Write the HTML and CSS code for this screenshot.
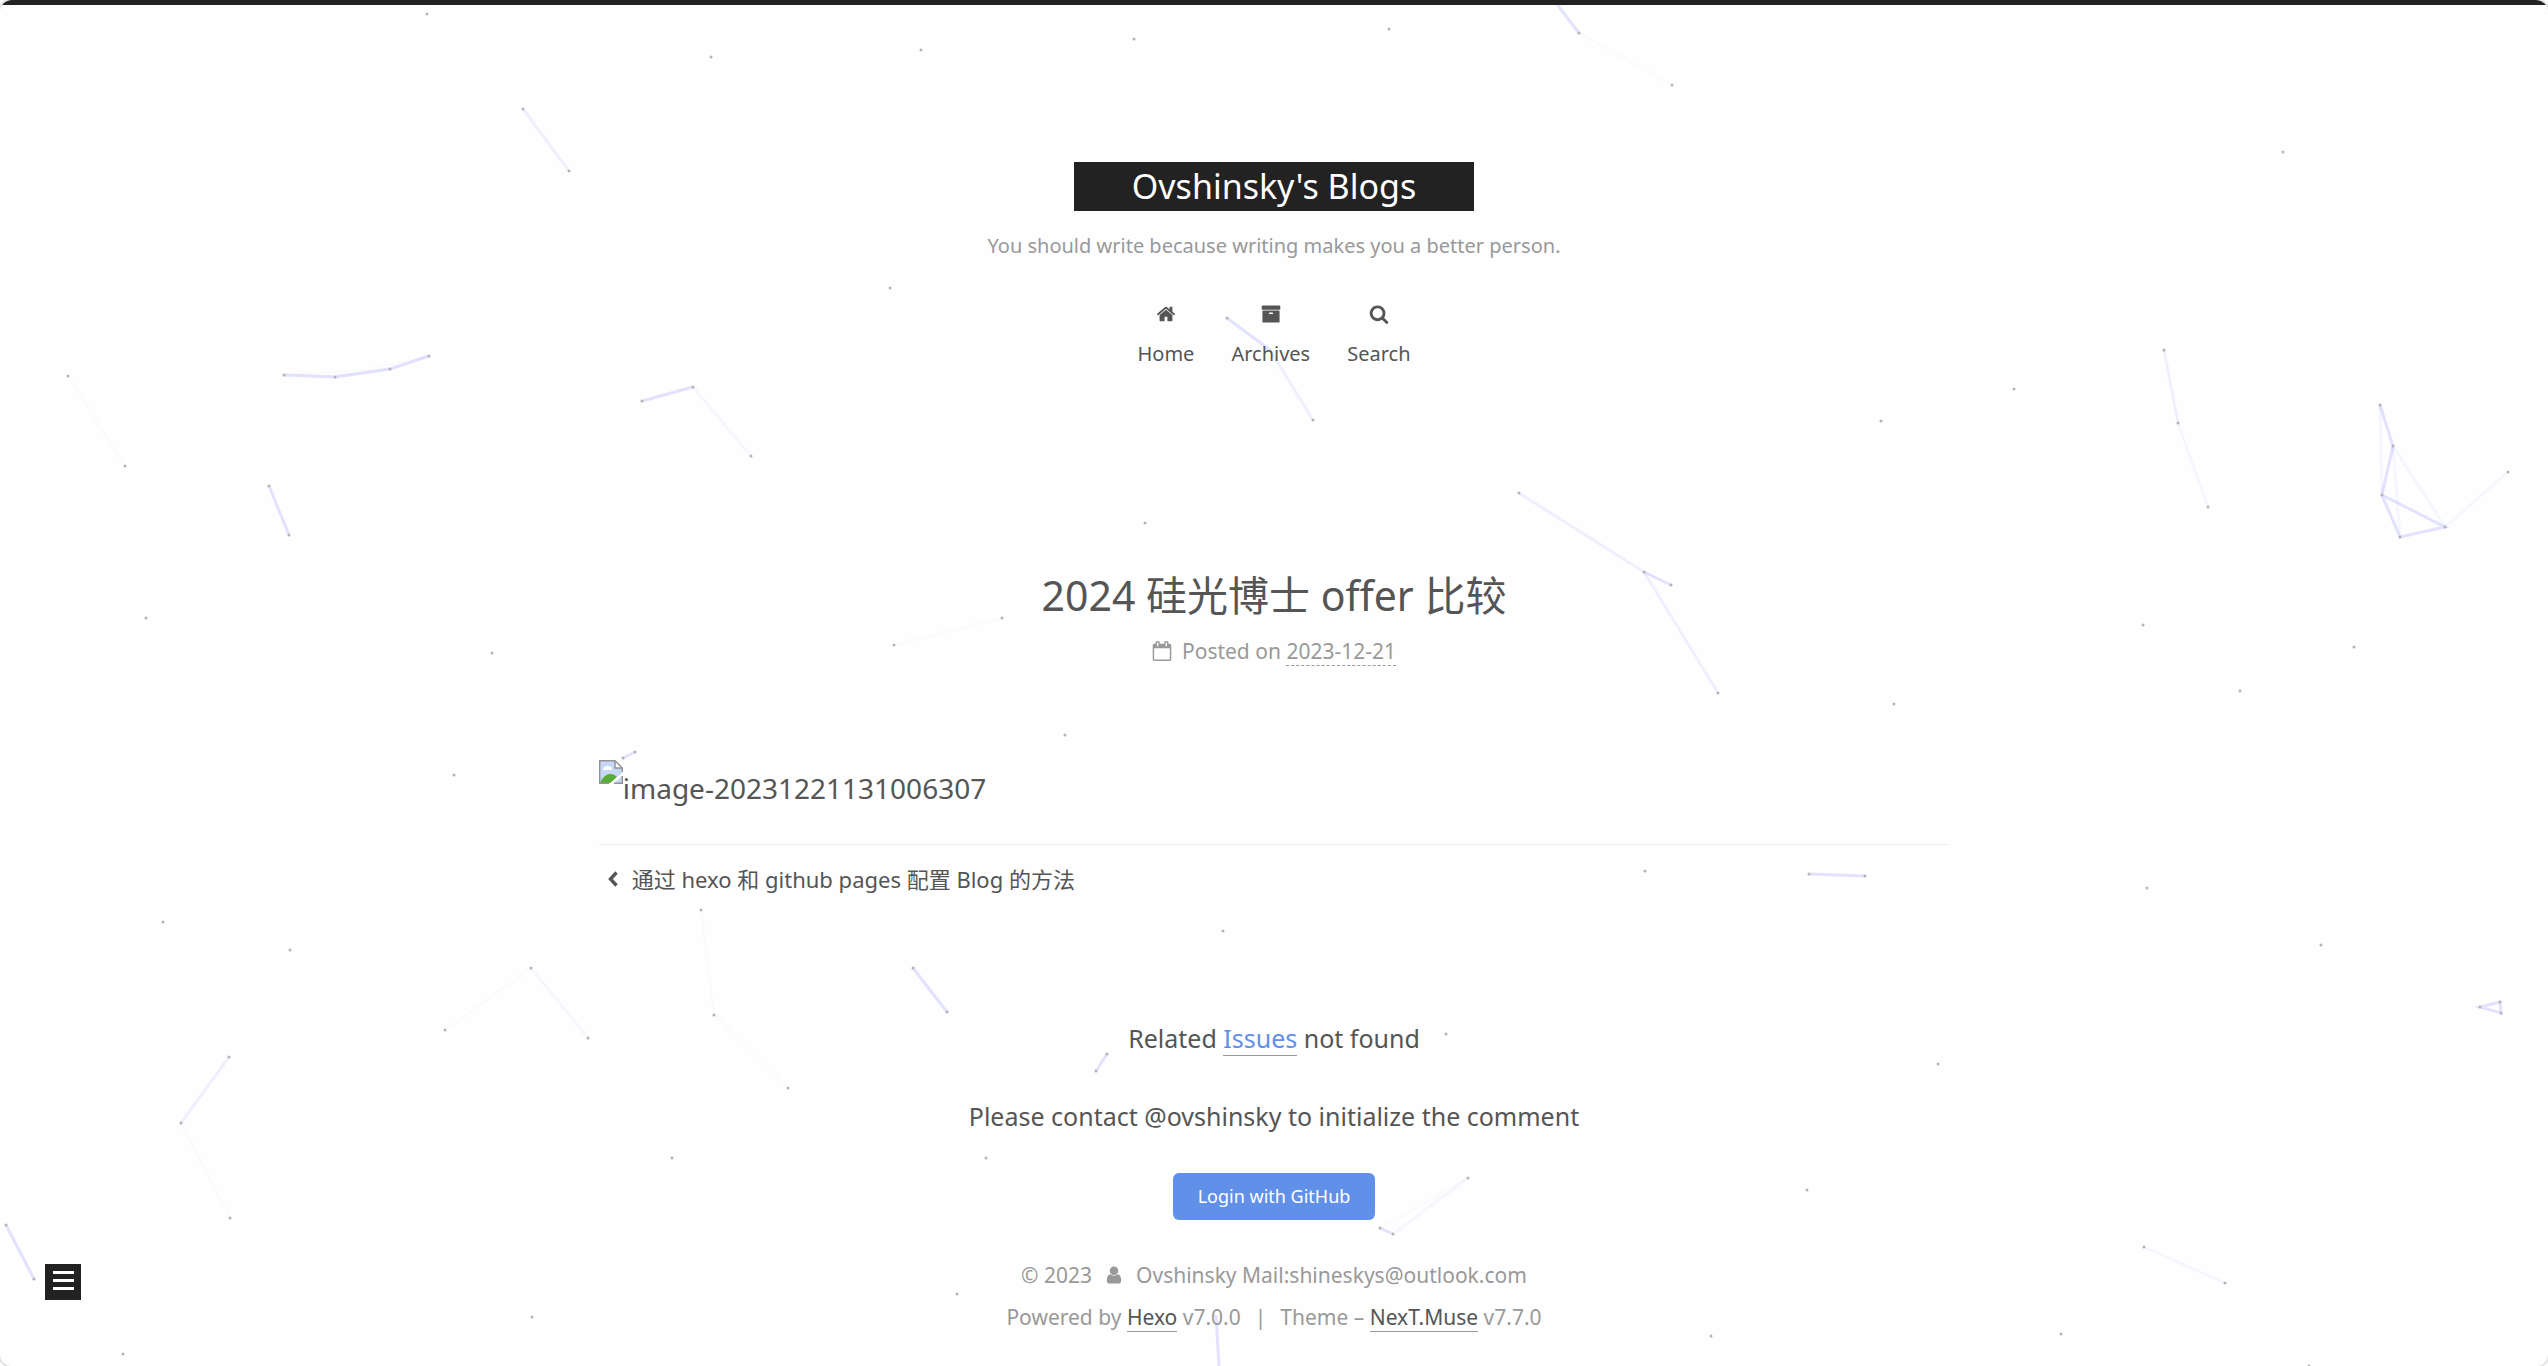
FILE: index.html
```html
<!DOCTYPE html>
<html lang="zh-CN">
<head>
<meta charset="utf-8">
<title>2024 硅光博士 offer 比较 | Ovshinsky's Blogs</title>
<link rel="stylesheet" href="styles.css">
</head>
<body>
<svg class="particles" viewBox="0 0 2548 1366" preserveAspectRatio="xMidYMid slice" aria-hidden="true">
  <path class="link-faint" d="M68 376L125 466M894 645L1002 618M1579 33L1672 85M284 375L390 369M335 377L429 356M445 1030L531 968M701 910L714 1015L788 1088M181 1123L230 1218M1380 1228L1468 1178"/>
  <path class="link-light" d="M693 387L751 456M531 968L588 1038M2178 423L2208 507M2380 405L2382 495M2393 446L2400 537M2393 446L2445 527L2508 472M2144 1247L2225 1283M1393 1234L1468 1178"/>
  <path class="link-medium" d="M523 109L569 171M1270 350L1313 420M1519 493L1644 572L1718 693M2164 350L2178 423M229 1057L181 1123"/>
  <path class="link-strong" d="M284 375L335 377L390 369L429 356M642 401L693 387M269 486L289 535M1556 3L1579 33M1227 318L1270 350M1644 572L1671 585M2380 405L2393 446L2382 495L2400 537L2445 527L2382 495M623 758L635 752M6 1225L34 1279M913 968L947 1012M1107 1054L1096 1071M1380 1228L1393 1234M1216 1315L1219 1366M1809 874L1865 876M2480 1007L2500 1002L2501 1013Z"/>
  <path class="nodes" d="M427 14h0M711 57h0M523 109h0M569 171h0M68 376h0M125 466h0M284 375h0M335 377h0M390 369h0M429 356h0M642 401h0M693 387h0M751 456h0M269 486h0M289 535h0M146 618h0M492 653h0M921 50h0M1134 39h0M1389 29h0M1579 33h0M1672 85h0M890 288h0M1227 318h0M1313 420h0M1145 523h0M1519 493h0M1644 572h0M1671 585h0M1718 693h0M1002 618h0M894 645h0M2283 152h0M2164 350h0M2178 423h0M2208 507h0M2014 389h0M1881 421h0M2380 405h0M2393 446h0M2382 495h0M2400 537h0M2445 527h0M2508 472h0M2143 625h0M2354 647h0M2240 691h0M454 775h0M623 758h0M635 752h0M163 922h0M290 950h0M531 968h0M445 1030h0M588 1038h0M701 910h0M714 1015h0M788 1088h0M229 1057h0M181 1123h0M230 1218h0M672 1158h0M6 1225h0M34 1279h0M123 1354h0M532 1317h0M1894 704h0M1809 874h0M1865 876h0M2147 888h0M2321 945h0M2480 1007h0M2500 1002h0M2501 1013h0M1938 1064h0M1807 1190h0M2144 1247h0M2225 1283h0M1711 1336h0M2061 1334h0M2309 1366h0M1065 735h0M1645 871h0M1223 931h0M913 968h0M947 1012h0M1107 1054h0M1096 1071h0M1446 1034h0M986 1158h0M1468 1178h0M1380 1228h0M1393 1234h0M957 1294h0"/>
</svg>

<div class="headband"></div>

<header class="header">
  <a class="brand" href="#">Ovshinsky's Blogs</a>
  <p class="subtitle">You should write because writing makes you a better person.</p>
  <nav class="menu">
    <a class="menu-item" href="#">
      <svg class="icon" viewBox="0 0 1664 1792" aria-hidden="true"><path d="M1408 992v480q0 26-19 45t-45 19H960v-384H704v384H320q-26 0-45-19t-19-45V992q0-1 .5-3t.5-3l575-474 575 474q1 2 1 6zm223-69l-62 74q-8 9-21 11h-3q-13 0-21-7L832 424l-692 577q-12 8-24 7-13-2-21-11l-62-74q-8-10-7-23.500t11-21.500l719-599q32-26 76-26t76 26l244 204V288q0-14 9-23t23-9h192q14 0 23 9t9 23v408l219 182q10 8 11 21.500t-7 23.500z"/></svg>
      Home
    </a>
    <a class="menu-item" href="#">
      <svg class="icon" viewBox="0 0 1792 1792" aria-hidden="true"><path d="M1088 832q0-26-19-45t-45-19H768q-26 0-45 19t-19 45 19 45 45 19h256q26 0 45-19t19-45zm576-192v960q0 26-19 45t-45 19H192q-26 0-45-19t-19-45V640q0-26 19-45t45-19h1408q26 0 45 19t19 45zm64-448v256q0 26-19 45t-45 19H128q-26 0-45-19t-19-45V192q0-26 19-45t45-19h1536q26 0 45 19t19 45z"/></svg>
      Archives
    </a>
    <a class="menu-item" href="#">
      <svg class="icon" viewBox="0 0 1664 1792" aria-hidden="true"><path d="M1152 832q0-185-131.500-316.500T704 384 387.500 515.500 256 832t131.500 316.500T704 1280t316.500-131.500T1152 832zm512 832q0 52-38 90t-90 38q-54 0-90-38l-343-342q-179 124-399 124-143 0-273.500-55.500t-225-150-150-225T0 832t55.500-273.500 150-225 225-150T704 128t273.500 55.500 225 150 150 225T1408 832q0 220-124 399l343 343q37 37 37 90z"/></svg>
      Search
    </a>
  </nav>
</header>

<main class="content">
  <article class="post">
    <h1 class="post-title">2024 硅光博士 offer 比较</h1>
    <p class="post-meta">
      <svg class="icon" viewBox="0 0 1664 1792" aria-hidden="true"><path d="M128 1664h1408V640H128v1024zM512 448V160q0-14-9-23t-23-9h-64q-14 0-23 9t-9 23v288q0 14 9 23t23 9h64q14 0 23-9t9-23zm768 0V160q0-14-9-23t-23-9h-64q-14 0-23 9t-9 23v288q0 14 9 23t23 9h64q14 0 23-9t9-23zm384-64v1280q0 52-38 90t-90 38H128q-52 0-90-38t-38-90V384q0-52 38-90t90-38h128v-96q0-66 47-113T416 0h64q66 0 113 47t47 113v96h384v-96q0-66 47-113t113-47h64q66 0 113 47t47 113v96h128q52 0 90 38t38 90z"/></svg>
      <span>Posted on <time class="post-date">2023-12-21</time></span>
    </p>
    <p class="figure">
      <svg class="broken" viewBox="0 0 24 24" aria-hidden="true">
        <path fill="#c6d8f6" d="M1 1h15l7 7v15H1z"/>
        <path fill="#fff" d="M4 9a2 2 0 0 1 2-2 3 3 0 0 1 5 0 1.500 1.500 0 0 1 1 3H4z"/>
        <path fill="#57ad35" d="M1 23c2-5 6-9 10-9 3 0 5 1 7 3l-6 6z"/>
        <path fill="#fefefe" d="M10 24l14-12v3L14 24z"/>
        <path fill="#fff" d="M16 1v7h7z"/>
        <path fill="none" stroke="#939393" stroke-width="1.400" d="M10 23.300H.7V.7H16L23.300 8v4M16 .7V8h7.300M23.300 16v7.300H15"/>
      </svg>
      <span>image-20231221131006307</span>
    </p>
    <nav class="post-nav">
      <a class="prev" href="#">
        <svg class="chevron" viewBox="0 0 10 16" aria-hidden="true"><path d="M8.500 1.500L2.500 8l6 6.500" fill="none" stroke="currentColor" stroke-width="3.400"/></svg>
        通过 hexo 和 github pages 配置 Blog 的方法
      </a>
    </nav>
  </article>

  <section class="comments">
    <p>Related <a class="issues" href="#">Issues</a> not found</p>
    <p>Please contact @ovshinsky to initialize the comment</p>
    <button class="login" type="button">Login with GitHub</button>
  </section>
</main>

<footer class="footer">
  <p class="footer-row">
    <span>© 2023</span>
    <svg class="icon user" viewBox="0 0 1280 1792" aria-hidden="true"><path d="M1280 1399q0 109-62.500 187t-150.500 78H213q-88 0-150.500-78T0 1399q0-85 8.500-160.500t31.500-152 58.500-131 94-89T327 832q131 128 313 128t313-128q76 0 134.500 34.500t94 89 58.500 131 31.500 152T1280 1399zm-256-887q0 159-112.500 271.500T640 896 368.500 783.500 256 512t112.500-271.500T640 128t271.500 112.500T1024 512z"/></svg>
    <span>Ovshinsky Mail:shineskys@outlook.com</span>
  </p>
  <p class="footer-row">
    <span>Powered by <a href="#">Hexo</a> v7.0.0</span>
    <span>|</span>
    <span>Theme – <a href="#">NexT.Muse</a> v7.7.0</span>
  </p>
</footer>

<button class="toggle" type="button" aria-label="Toggle sidebar"><span></span><span></span><span></span></button>
</body>
</html>
```

FILE: styles.css
```css
* {
  box-sizing: border-box;
}

html {
  background: #fff;
}

body {
  margin: 0;
  min-height: 100vh;
  position: relative;
  isolation: isolate;
  overflow-x: hidden;
  background: #fefefe;
  border-radius: 12px;
  box-shadow: 0 0 0 2px #e4e4e4;
  color: #555;
  font-family: "Noto Sans", "Noto Sans CJK SC", sans-serif;
  font-size: 20px;
  line-height: 42px;
}

p,
h1 {
  margin: 0;
}

a {
  color: #555;
  text-decoration: none;
}

/* Floating particle network behind the page */
.particles {
  position: absolute;
  inset: 0;
  width: 100%;
  height: 100%;
  z-index: -1;
  fill: none;
}

.link-faint,
.link-light,
.link-medium,
.link-strong {
  stroke: #00f;
  stroke-width: 3;
}

.link-faint { stroke-opacity: 0.01; }
.link-light { stroke-opacity: 0.03; }
.link-medium { stroke-opacity: 0.06; }
.link-strong { stroke-opacity: 0.11; }

.nodes {
  stroke: #b4b4b4;
  stroke-width: 3;
  stroke-linecap: round;
}

.headband {
  height: 5px;
  background: #222;
  border-radius: 10px 10px 0 0 / 5px 5px 0 0;
}

.icon {
  width: 20px;
  height: 20px;
  fill: currentColor;
}

.header {
  display: flex;
  flex-direction: column;
  align-items: center;
  padding-top: 157px;
}

.brand {
  padding: 0 58px;
  background: #222;
  color: #fff;
  font-size: 34px;
  line-height: 49px;
}

.subtitle {
  margin-top: 14px;
  color: #999;
}

.menu {
  display: flex;
  gap: 37px;
  margin-top: 37px;
}

.menu-item {
  display: flex;
  flex-direction: column;
  align-items: center;
  line-height: 40px;
  gap: 10px;
}

.content {
  width: 53%;
  margin: 0 auto;
}

.post {
  padding-top: 191px;
}

.post-title {
  font-size: 41px;
  font-weight: 400;
  line-height: 60px;
  text-align: center;
}

.post-meta {
  display: flex;
  justify-content: center;
  align-items: center;
  gap: 10px;
  color: #999;
  font-size: 21px;
  line-height: 28px;
  margin-top: 12px;
}

.post-date {
  border-bottom: 1px dashed #999;
}

.figure {
  display: flex;
  margin-top: 95px;
  font-size: 28px;
  line-height: 56px;
}

.broken {
  width: 24px;
  height: 24px;
}

.post-nav {
  margin-top: 28px;
  padding: 12px 9px;
  border-top: 1px solid #eee;
  font-size: 22px;
}

.prev {
  display: inline-flex;
  align-items: center;
  gap: 14px;
}

.chevron {
  width: 10px;
  height: 16px;
}

.comments {
  display: flex;
  flex-direction: column;
  align-items: center;
  gap: 36px;
  padding-top: 105px;
  font-size: 25px;
}

.issues {
  color: #6190e8;
  border-bottom: 1px solid #999;
}

.login {
  padding: 0 25px;
  border: 0;
  border-radius: 6px;
  background: #6190e8;
  color: #fff;
  font: inherit;
  font-size: 18px;
  line-height: 47px;
}

.footer {
  padding-top: 34px;
  color: #999;
  font-size: 21px;
}

.footer-row {
  display: flex;
  justify-content: center;
  align-items: center;
  gap: 14px;
}

.footer a {
  border-bottom: 1px solid #999;
}

.user {
  width: 16px;
}

/* Sidebar toggle pinned over the page */
.toggle {
  position: fixed;
  left: 45px;
  bottom: 66px;
  width: 36px;
  height: 36px;
  display: flex;
  flex-direction: column;
  gap: 5px;
  padding: 7px 7px 0 8px;
  border: 0;
  background: #222;
}

.toggle span {
  height: 3px;
  background: #fff;
}
```
